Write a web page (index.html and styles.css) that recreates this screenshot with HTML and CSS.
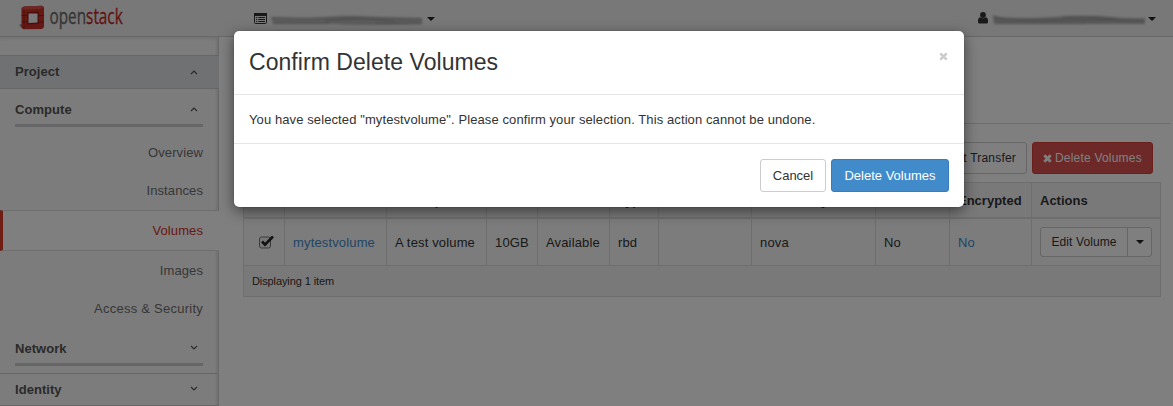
FILE: index.html
```html
<!DOCTYPE html>
<html lang="en">
<head>
<meta charset="utf-8">
<title>Volumes - OpenStack Dashboard</title>
<link rel="stylesheet" href="styles.css">
</head>
<body>
<header class="topbar">
  <svg class="logo" width="118" height="32" viewBox="0 0 118 32">
    <path d="M1 23l4-2v6z" fill="#999"/>
    <path d="M3.500 6l2.500-1.500 18-.7 2 1.500v20l-2 1.700-18.500.3-2-1.600z" fill="#c8322b"/>
    <path d="M3.500 6l2.500-1.500 18-.7 2 1.500-4 1.700-16 .5z" fill="#da5148"/>
    <path d="M6 8v19M3.500 13.500h7M3.500 20h7M20 13.500h6M20 20h6" stroke="#961a15" stroke-width=".8" fill="none"/>
    <path d="M9 10l12-.5v12.500l-12 .5z" fill="#9c1d17"/>
    <path d="M10.500 11.500h9v9l-9 .5z" fill="#f2f2f2"/>
    <text transform="translate(31.500 22) scale(.73 1)" class="logo-text">open<tspan class="logo-red">stack</tspan></text>
  </svg>
  <div class="picker project">
    <svg width="13" height="11" viewBox="0 0 13 11"><rect x=".5" y=".5" width="12" height="10" rx="1" fill="none" stroke="#333"/><path d="M0 0h13v3H0z" fill="#333"/><path d="M2 4.500h1.300M2 6.500h1.300M2 8.500h1.300M4.300 4.500H11M4.300 6.500H11M4.300 8.500H11" stroke="#333"/></svg>
    <svg class="smudge" width="154" height="14" viewBox="0 0 154 14"><path d="M1 4Q30 6 55 4T90 3T152 5V11Q125 12 100 12T65 11T3 11z" fill="#b8b8b8"/><path d="M1 4.500Q40 6 65 5T152 6M55 8Q85 4 125 8" stroke="#999" fill="none"/><path d="M3 10.500H60M105 10.500H152" stroke="#999" fill="none"/></svg>
    <i class="caret"></i>
  </div>
  <div class="picker user">
    <svg width="10" height="12" viewBox="0 0 10 12"><circle cx="5" cy="3" r="2.900" fill="#333"/><path d="M0 10V8.500Q0 5.500 2 5.200Q5 7.500 8 5.200Q10 5.500 10 8.500V10Q10 11.500 8.500 11.500h-7Q0 11.500 0 10z" fill="#333"/></svg>
    <svg class="smudge" width="156" height="14" viewBox="0 0 156 14"><path d="M2 2Q6 5 30 5T75 3Q100 2 120 4T154 5V11Q120 11 90 11T3 11z" fill="#b0b0b0"/><path d="M2 4Q15 8 70 7T153 8M72 4Q100 3 125 6" stroke="#949494" fill="none"/><path d="M4 10.500H95" stroke="#a0a0a0" fill="none"/></svg>
    <i class="caret"></i>
  </div>
</header>
<div class="layout">
  <nav class="sidebar">
    <div class="panel open">Project<svg class="chev" viewBox="0 0 8 5"><path d="M1 4l3-3 3 3"/></svg></div>
    <div class="group">Compute<svg class="chev" viewBox="0 0 8 5"><path d="M1 4l3-3 3 3"/></svg></div>
    <a class="item">Overview</a>
    <a class="item">Instances</a>
    <a class="item active">Volumes</a>
    <a class="item">Images</a>
    <a class="item wide">Access &amp; Security</a>
    <div class="group network">Network<svg class="chev" viewBox="0 0 8 5"><path d="M1 1l3 3 3-3"/></svg></div>
    <div class="panel identity">Identity<svg class="chev" viewBox="0 0 8 5"><path d="M1 1l3 3 3-3"/></svg></div>
  </nav>
  <main class="content">
    <div class="page-head"></div>
    <div class="actions">
      <button class="btn">Accept Transfer</button>
      <button class="btn danger"><svg width="9" height="9" viewBox="0 0 9 9"><path d="M1.300 1.300l6.400 6.400M7.700 1.300L1.300 7.700" stroke="#fff" stroke-width="2.800"/></svg>Delete Volumes</button>
    </div>
    <table class="volumes">
      <colgroup><col class="c-check"><col class="c-name"><col class="c-desc"><col class="c-size"><col class="c-status"><col class="c-type"><col class="c-att"><col class="c-zone"><col class="c-boot"><col class="c-enc"><col class="c-act"></colgroup>
      <thead><tr><th></th><th>Name</th><th>Description</th><th>Size</th><th>Status</th><th>Type</th><th>Attached To</th><th>Availability Zone</th><th>Bootable</th><th>Encrypted</th><th>Actions</th></tr></thead>
      <tbody><tr>
        <td class="check"><svg width="16" height="14" viewBox="0 0 16 14"><rect x="1.500" y="2" width="11" height="11" rx="2" fill="#eee" stroke="#777"/><path d="M4 6.500l3 3.200L15 1.500" fill="none" stroke="#222" stroke-width="2.600"/></svg></td>
        <td><a class="link">mytestvolume</a></td><td>A test volume</td><td>10GB</td><td>Available</td><td>rbd</td><td></td><td>nova</td><td>No</td><td><a class="link">No</a></td>
        <td class="act"><div class="split"><button class="edit">Edit Volume</button><button class="drop"><i class="caret"></i></button></div></td>
      </tr></tbody>
      <tfoot><tr><td colspan="11">Displaying 1 item</td></tr></tfoot>
    </table>
  </main>
</div>
<div class="backdrop">
  <section class="modal">
    <div class="modal-header"><h3>Confirm Delete Volumes</h3><svg class="close" width="9" height="9" viewBox="0 0 9 9"><path d="M1.300 1.300l6.400 6.400M7.700 1.300L1.300 7.700" stroke="#ccc" stroke-width="2.600"/></svg></div>
    <div class="modal-body">You have selected "mytestvolume". Please confirm your selection. This action cannot be undone.</div>
    <div class="modal-footer"><button class="btn cancel">Cancel</button><button class="btn primary">Delete Volumes</button></div>
  </section>
</div>
</body>
</html>
```
FILE: styles.css
```css
* { box-sizing: border-box; }
body {
  margin: 0;
  height: 406px;
  overflow: hidden;
  background: #fff;
  color: #333;
  font: 13px/18px "Liberation Sans", Arial, sans-serif;
  letter-spacing: .15px;
}
button { font: inherit; letter-spacing: inherit; color: inherit; margin: 0; }
.topbar {
  display: flex;
  height: 37px;
  padding: 2px 17px 0 18px;
  background: #f0f0f0;
  border-bottom: 1px solid #d0d0d0;
}
.logo-text { font: 21px "Open Sans", sans-serif; letter-spacing: 0; fill: #6a6a6a; stroke: #6a6a6a; stroke-width: .3; }
.logo-red { fill: #c4271f; stroke: #c4271f; }
.picker { display: flex; align-items: center; height: 32px; }
.project { margin-left: 118px; }
.user { margin-left: auto; }
.smudge { margin: 3px 3px 0; filter: blur(.8px); }
.user .smudge { margin-right: 1px; }
.caret { border: 4px solid transparent; border-top-color: #222; border-bottom: 0; margin-top: 1px; }
.layout { display: flex; height: 369px; }
.sidebar {
  width: 219px;
  padding-top: 18px;
  background: #f9f9f9;
  box-shadow: inset -3px 0 2px -1px #e4e4e4, inset 0 4px 4px -3px #ddd;
  border-right: 1px solid #d0d0d0;
}
.panel, .group { display: flex; justify-content: space-between; font-weight: bold; color: #555; letter-spacing: .05px; }
.chev { width: 8px; height: 5px; fill: none; stroke: #555; stroke-width: 1.2; }
.panel { height: 34px; padding: 7px 20px 0 15px; border: solid #ccc; border-width: 1px 0; }
.panel .chev { margin-top: 6px; }
.open { background: #e0e3e6; margin-right: -1px; padding-right: 21px; }
.open .chev { margin-top: 7px; }
.group { height: 38px; margin: 0 15px 7px; padding: 12px 5px 0 0; border-bottom: 3px solid #ccc; }
.group .chev { margin-top: 6px; }
.item { display: block; height: 38px; padding: 10px 15px 0 0; color: #6e6e6e; text-align: right; letter-spacing: .1px; }
.wide { letter-spacing: .25px; }
.active { height: 41px; margin: 0 -1px 1px 0; padding-top: 11px; padding-right: 16px; background: #fff; border: solid #ddd; border-width: 1px 0; border-left: 3px solid #df3d28; color: #d32f1f; }
.network { margin-top: 0; }
.network .chev { margin-top: 5px; }
.identity { height: 33px; padding-top: 7px; }
.identity .chev { margin-top: 5px; }
.content { flex: 1; padding: 0 12px 0 24px; }
.page-head { height: 87px; margin-right: -10px; border-bottom: 1px solid #ddd; }
.actions { display: flex; justify-content: flex-end; gap: 5px; padding: 18px 8px 8px 0; }
.btn { height: 32px; padding: 0 10px; background: #fff; border: 1px solid #ccc; border-radius: 3px; font-size: 12px; letter-spacing: .2px; }
.danger { display: flex; align-items: center; gap: 3px; width: 121px; background: #d9534f; border-color: #d43f3a; color: #fff; }
.volumes { width: 918px; table-layout: fixed; border-collapse: collapse; border: 1px solid #ddd; }
.volumes th, .volumes td { padding: 0 8px; border: 1px solid #ddd; text-align: left; white-space: nowrap; }
.volumes th { height: 35px; padding-top: 2px; background: #f2f2f2; border-bottom-width: 2px; letter-spacing: 0; }
.volumes tbody td { height: 48px; padding-top: 2px; background: #f9f9f9; }
.volumes tfoot td { height: 31px; background: #f2f2f2; font-size: 11px; letter-spacing: -.1px; }
.volumes tbody .check { padding: 1px 0 0 14px; }
.volumes tbody .act { padding-top: 0; }
.check svg { display: block; }
.c-check { width: 41px; } .c-name { width: 102px; } .c-desc { width: 100px; }
.c-size { width: 51px; } .c-status { width: 72px; } .c-type { width: 49px; }
.c-att { width: 93px; } .c-zone { width: 124px; } .c-boot { width: 74px; }
.c-enc { width: 82px; } .c-act { width: 129px; }
.link { color: #428bca; }
.split { display: flex; height: 30px; width: 112px; border: 1px solid #ccc; border-radius: 3px; background: #fff; font-size: 12px; letter-spacing: .1px; }
.edit { width: 86px; padding: 0; border: 0; background: none; }
.drop { display: flex; align-items: center; justify-content: center; flex: 1; padding: 0; border: 0; border-left: 1px solid #ccc; background: none; }
.drop .caret { margin-top: 0; }
.backdrop { position: absolute; inset: 0; padding: 31px 0 0 234px; background: rgba(0, 0, 0, .5); }
.modal { width: 730px; height: 176px; background: #fff; border-radius: 5px; box-shadow: 0 4px 14px rgba(0, 0, 0, .5), 0 0 1px rgba(0, 0, 0, .5); }
.modal-header { display: flex; justify-content: space-between; height: 64px; padding: 15px 16px 0 15px; border-bottom: 1px solid #e5e5e5; }
.modal-header h3 { margin: 0; font-size: 23px; line-height: 33px; font-weight: normal; letter-spacing: .05px; }
.close { margin-top: 6px; }
.modal-body { height: 49px; padding: 16px 15px 0; border-bottom: 1px solid #e5e5e5; letter-spacing: .1px; }
.modal-footer { display: flex; justify-content: flex-end; gap: 5px; padding: 15px; }
.modal-footer .btn { height: 33px; width: 66px; padding: 0; font-size: 13px; letter-spacing: 0; }
.modal-footer .primary { width: 118px; background: #428bca; border-color: #357ebd; color: #fff; }
```
